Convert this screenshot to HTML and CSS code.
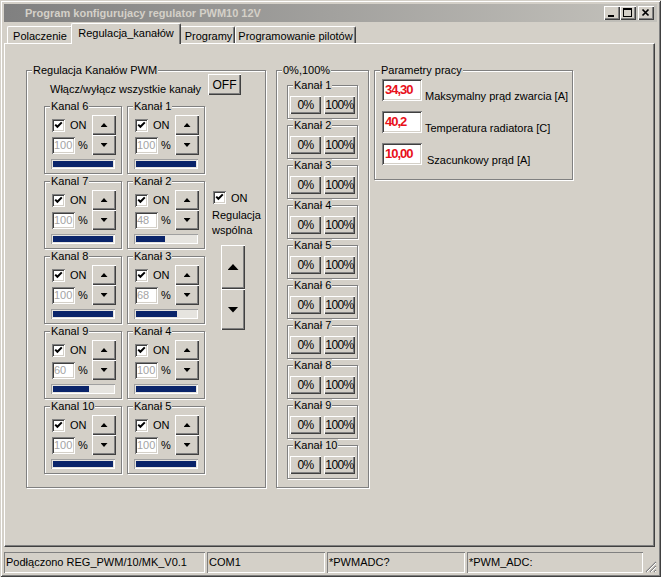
FILE: index.html
```html
<!DOCTYPE html>
<html lang="pl">
<head>
  <meta charset="UTF-8" />
  <title>Program konfigurujacy regulator PWM10 12V</title>
  <link rel="stylesheet" href="styles.css">
</head>
<body>
<div class="window">

  <div class="titlebar">
    <span class="title">Program konfigurujacy regulator PWM10 12V</span>
    <span class="cap-btn"><svg width="16" height="14" viewBox="0 0 16 14"><rect x="4" y="9" width="6" height="2"/></svg></span>
    <span class="cap-btn"><svg width="16" height="14" viewBox="0 0 16 14"><path fill-rule="evenodd" d="M3 2h9v9H3z M4 4v6h7V4z"/></svg></span>
    <span class="cap-btn close"><svg width="16" height="14" viewBox="0 0 16 14"><path d="M4.5 3.5l6 6M10.5 3.5l-6 6" stroke="#000" stroke-width="1.7"/></svg></span>
  </div>

  <div class="tabs">
    <div class="tab tab-1">Polaczenie</div>
    <div class="tab tab-2 active">Regulacja_kanałów</div>
    <div class="tab tab-3">Programy</div>
    <div class="tab tab-4">Programowanie pilotów</div>
  </div>

  <div class="page">

    <div class="group pwm">
      <span class="group-title">Regulacja Kanałów PWM</span>
      <div class="all-row">
        <span class="all-label">Włącz/wyłącz wszystkie kanały</span>
        <button class="btn btn-off">OFF</button>
      </div>

      <div class="channels">
        <div class="grid">

          <div class="group ch">
            <span class="group-title">Kanal 6</span>
            <div class="ch-main">
              <div class="ch-left">
                <div class="ch-row"><span class="chk"><svg width="9" height="9" viewBox="0 0 9 9"><path d="M1.2 3.6l2.2 2.2 4.4-4.4" stroke="#000" stroke-width="2" fill="none"/></svg></span><span class="on">ON</span></div>
                <div class="ch-row"><span class="num">100</span><span class="pct">%</span></div>
              </div>
              <div class="ch-btns"><button class="btn sbtn"><i class="arr up"></i></button><button class="btn sbtn"><i class="arr down"></i></button></div>
            </div>
            <div class="bar"><div class="fill" style="width:100%"></div></div>
          </div>

          <div class="group ch">
            <span class="group-title">Kanał 1</span>
            <div class="ch-main">
              <div class="ch-left">
                <div class="ch-row"><span class="chk"><svg width="9" height="9" viewBox="0 0 9 9"><path d="M1.2 3.6l2.2 2.2 4.4-4.4" stroke="#000" stroke-width="2" fill="none"/></svg></span><span class="on">ON</span></div>
                <div class="ch-row"><span class="num">100</span><span class="pct">%</span></div>
              </div>
              <div class="ch-btns"><button class="btn sbtn"><i class="arr up"></i></button><button class="btn sbtn"><i class="arr down"></i></button></div>
            </div>
            <div class="bar"><div class="fill" style="width:100%"></div></div>
          </div>

          <div class="group ch">
            <span class="group-title">Kanal 7</span>
            <div class="ch-main">
              <div class="ch-left">
                <div class="ch-row"><span class="chk"><svg width="9" height="9" viewBox="0 0 9 9"><path d="M1.2 3.6l2.2 2.2 4.4-4.4" stroke="#000" stroke-width="2" fill="none"/></svg></span><span class="on">ON</span></div>
                <div class="ch-row"><span class="num">100</span><span class="pct">%</span></div>
              </div>
              <div class="ch-btns"><button class="btn sbtn"><i class="arr up"></i></button><button class="btn sbtn"><i class="arr down"></i></button></div>
            </div>
            <div class="bar"><div class="fill" style="width:100%"></div></div>
          </div>

          <div class="group ch">
            <span class="group-title">Kanał 2</span>
            <div class="ch-main">
              <div class="ch-left">
                <div class="ch-row"><span class="chk"><svg width="9" height="9" viewBox="0 0 9 9"><path d="M1.2 3.6l2.2 2.2 4.4-4.4" stroke="#000" stroke-width="2" fill="none"/></svg></span><span class="on">ON</span></div>
                <div class="ch-row"><span class="num">48</span><span class="pct">%</span></div>
              </div>
              <div class="ch-btns"><button class="btn sbtn"><i class="arr up"></i></button><button class="btn sbtn"><i class="arr down"></i></button></div>
            </div>
            <div class="bar"><div class="fill" style="width:48%"></div></div>
          </div>

          <div class="group ch">
            <span class="group-title">Kanal 8</span>
            <div class="ch-main">
              <div class="ch-left">
                <div class="ch-row"><span class="chk"><svg width="9" height="9" viewBox="0 0 9 9"><path d="M1.2 3.6l2.2 2.2 4.4-4.4" stroke="#000" stroke-width="2" fill="none"/></svg></span><span class="on">ON</span></div>
                <div class="ch-row"><span class="num">100</span><span class="pct">%</span></div>
              </div>
              <div class="ch-btns"><button class="btn sbtn"><i class="arr up"></i></button><button class="btn sbtn"><i class="arr down"></i></button></div>
            </div>
            <div class="bar"><div class="fill" style="width:100%"></div></div>
          </div>

          <div class="group ch">
            <span class="group-title">Kanał 3</span>
            <div class="ch-main">
              <div class="ch-left">
                <div class="ch-row"><span class="chk"><svg width="9" height="9" viewBox="0 0 9 9"><path d="M1.2 3.6l2.2 2.2 4.4-4.4" stroke="#000" stroke-width="2" fill="none"/></svg></span><span class="on">ON</span></div>
                <div class="ch-row"><span class="num">68</span><span class="pct">%</span></div>
              </div>
              <div class="ch-btns"><button class="btn sbtn"><i class="arr up"></i></button><button class="btn sbtn"><i class="arr down"></i></button></div>
            </div>
            <div class="bar"><div class="fill" style="width:68%"></div></div>
          </div>

          <div class="group ch">
            <span class="group-title">Kanal 9</span>
            <div class="ch-main">
              <div class="ch-left">
                <div class="ch-row"><span class="chk"><svg width="9" height="9" viewBox="0 0 9 9"><path d="M1.2 3.6l2.2 2.2 4.4-4.4" stroke="#000" stroke-width="2" fill="none"/></svg></span><span class="on">ON</span></div>
                <div class="ch-row"><span class="num">60</span><span class="pct">%</span></div>
              </div>
              <div class="ch-btns"><button class="btn sbtn"><i class="arr up"></i></button><button class="btn sbtn"><i class="arr down"></i></button></div>
            </div>
            <div class="bar"><div class="fill" style="width:60%"></div></div>
          </div>

          <div class="group ch">
            <span class="group-title">Kanał 4</span>
            <div class="ch-main">
              <div class="ch-left">
                <div class="ch-row"><span class="chk"><svg width="9" height="9" viewBox="0 0 9 9"><path d="M1.2 3.6l2.2 2.2 4.4-4.4" stroke="#000" stroke-width="2" fill="none"/></svg></span><span class="on">ON</span></div>
                <div class="ch-row"><span class="num">100</span><span class="pct">%</span></div>
              </div>
              <div class="ch-btns"><button class="btn sbtn"><i class="arr up"></i></button><button class="btn sbtn"><i class="arr down"></i></button></div>
            </div>
            <div class="bar"><div class="fill" style="width:100%"></div></div>
          </div>

          <div class="group ch">
            <span class="group-title">Kanal 10</span>
            <div class="ch-main">
              <div class="ch-left">
                <div class="ch-row"><span class="chk"><svg width="9" height="9" viewBox="0 0 9 9"><path d="M1.2 3.6l2.2 2.2 4.4-4.4" stroke="#000" stroke-width="2" fill="none"/></svg></span><span class="on">ON</span></div>
                <div class="ch-row"><span class="num">100</span><span class="pct">%</span></div>
              </div>
              <div class="ch-btns"><button class="btn sbtn"><i class="arr up"></i></button><button class="btn sbtn"><i class="arr down"></i></button></div>
            </div>
            <div class="bar"><div class="fill" style="width:100%"></div></div>
          </div>

          <div class="group ch">
            <span class="group-title">Kanał 5</span>
            <div class="ch-main">
              <div class="ch-left">
                <div class="ch-row"><span class="chk"><svg width="9" height="9" viewBox="0 0 9 9"><path d="M1.2 3.6l2.2 2.2 4.4-4.4" stroke="#000" stroke-width="2" fill="none"/></svg></span><span class="on">ON</span></div>
                <div class="ch-row"><span class="num">100</span><span class="pct">%</span></div>
              </div>
              <div class="ch-btns"><button class="btn sbtn"><i class="arr up"></i></button><button class="btn sbtn"><i class="arr down"></i></button></div>
            </div>
            <div class="bar"><div class="fill" style="width:100%"></div></div>
          </div>

        </div>

        <div class="side">
          <div class="ch-row"><span class="chk"><svg width="9" height="9" viewBox="0 0 9 9"><path d="M1.2 3.6l2.2 2.2 4.4-4.4" stroke="#000" stroke-width="2" fill="none"/></svg></span><span class="on">ON</span></div>
          <div class="side-label">Regulacja<br>wspólna</div>
          <button class="btn big big-up"><i class="arr big-arr up"></i></button>
          <button class="btn big big-down"><i class="arr big-arr down"></i></button>
        </div>
      </div>
    </div>

    <div class="group zp">
      <span class="group-title">0%,100%</span>
      <div class="group sub"><span class="group-title">Kanał 1</span><button class="btn zbtn">0%</button><button class="btn zbtn">100%</button></div>
      <div class="group sub"><span class="group-title">Kanał 2</span><button class="btn zbtn">0%</button><button class="btn zbtn">100%</button></div>
      <div class="group sub"><span class="group-title">Kanał 3</span><button class="btn zbtn">0%</button><button class="btn zbtn">100%</button></div>
      <div class="group sub"><span class="group-title">Kanał 4</span><button class="btn zbtn">0%</button><button class="btn zbtn">100%</button></div>
      <div class="group sub"><span class="group-title">Kanał 5</span><button class="btn zbtn">0%</button><button class="btn zbtn">100%</button></div>
      <div class="group sub"><span class="group-title">Kanał 6</span><button class="btn zbtn">0%</button><button class="btn zbtn">100%</button></div>
      <div class="group sub"><span class="group-title">Kanał 7</span><button class="btn zbtn">0%</button><button class="btn zbtn">100%</button></div>
      <div class="group sub"><span class="group-title">Kanał 8</span><button class="btn zbtn">0%</button><button class="btn zbtn">100%</button></div>
      <div class="group sub"><span class="group-title">Kanał 9</span><button class="btn zbtn">0%</button><button class="btn zbtn">100%</button></div>
      <div class="group sub"><span class="group-title">Kanał 10</span><button class="btn zbtn">0%</button><button class="btn zbtn">100%</button></div>
    </div>

    <div class="group params">
      <span class="group-title">Parametry pracy</span>
      <div class="prow"><span class="fld">34,30</span><span class="plabel">Maksymalny prąd zwarcia [A]</span></div>
      <div class="prow"><span class="fld">40,2</span><span class="plabel">Temperatura radiatora [C]</span></div>
      <div class="prow"><span class="fld">10,00</span><span class="plabel plabel-3">Szacunkowy prąd [A]</span></div>
    </div>

  </div>

  <div class="status">
    <div class="st st-1">Podłączono REG_PWM/10/MK_V0.1</div>
    <div class="st st-2">COM1</div>
    <div class="st st-3">*PWMADC?</div>
    <div class="st st-4">*PWM_ADC:</div>
    <div class="grip"><svg width="12" height="12" viewBox="0 0 12 12"><path d="M11 1L1 11M11 5L5 11M11 9L9 11" stroke="#808080" stroke-width="1.2"/><path d="M11 2L2 11M11 6L6 11M11 10L10 11" stroke="#fff" stroke-width="1"/></svg></div>
  </div>

</div>
</body>
</html>
```

FILE: styles.css
```css
body {
  margin: 0;
  background: #d4d0c8;
  font: 11px "Liberation Sans", Arial, sans-serif;
  color: #000;
}
.window {
  width: 661px;
  height: 577px;
  box-sizing: border-box;
  padding: 4px;
  display: flex;
  flex-direction: column;
  box-shadow: inset 1px 1px #d4d0c8, inset -1px -1px #404040, inset 2px 2px #fff, inset -2px -2px #808080;
}

/* title bar */
.titlebar {
  flex: none;
  height: 18px;
  display: flex;
  align-items: center;
  padding: 0 3px 0 21px;
  background: linear-gradient(to right, #808080, #c4c2bc);
}
.title {
  flex: 1;
  font-weight: bold;
  color: #d4d0c8;
}
.cap-btn {
  width: 16px;
  height: 14px;
  background: #d4d0c8;
  box-shadow: inset 1px 1px #fff, inset -1px -1px #404040, inset -2px -2px #808080;
}
.cap-btn svg {
  display: block;
}
.cap-btn.close {
  margin-left: 2px;
}

/* tabs */
.tabs {
  flex: none;
  height: 21px;
  display: flex;
  align-items: flex-end;
  padding-left: 3px;
  position: relative;
  z-index: 1;
}
.tab {
  height: 17px;
  box-sizing: border-box;
  border: 1px solid #fff;
  border-right-color: #404040;
  border-bottom: none;
  border-radius: 2px 2px 0 0;
  box-shadow: inset -1px 0 #808080;
  display: flex;
  align-items: center;
  justify-content: center;
  padding-top: 1px;
  white-space: nowrap;
}
.tab-1 { width: 66px; }
.tab-2 { width: 110px; }
.tab-3 { width: 56px; padding-left: 3px; }
.tab-4 { width: 121px; }
.tab.active {
  height: 21px;
  margin: 0 -2px -1px;
  padding: 0 0 3px;
  background: #d4d0c8;
  position: relative;
  z-index: 2;
}

/* page */
.page {
  flex: 1;
  margin-right: 2px;
  border: 1px solid;
  border-color: #fff #404040 #404040 #fff;
  box-shadow: inset -1px -1px #808080;
  padding: 26px 0 0 21px;
  display: flex;
  align-items: flex-start;
}

/* group boxes */
.group {
  position: relative;
  box-sizing: border-box;
  border: 1px solid #808080;
  box-shadow: inset 1px 1px #fff, 1px 1px #fff;
}
.group-title {
  position: absolute;
  top: -7px;
  left: 5px;
  padding: 0 1px;
  line-height: 13px;
  background: #d4d0c8;
  white-space: nowrap;
}

/* buttons */
.btn {
  font: inherit;
  color: #000;
  background: #d4d0c8;
  border: none;
  padding: 0;
  margin: 0;
  box-shadow: inset 1px 1px #fff, inset -1px -1px #404040, inset -2px -2px #808080;
  display: flex;
  align-items: center;
  justify-content: center;
}
.arr {
  display: block;
  width: 7px;
  height: 4px;
  background: #000;
}
.arr.up {
  clip-path: polygon(50% 0, 100% 100%, 0 100%);
}
.arr.down {
  clip-path: polygon(0 0, 100% 0, 50% 100%);
}

/* sunken controls */
.chk, .num, .fld {
  background: #fff;
  box-sizing: border-box;
  box-shadow: inset 1px 1px #808080, inset -1px -1px #fff, inset 2px 2px #404040, inset -2px -2px #d4d0c8;
}
.chk {
  width: 13px;
  height: 13px;
  margin-left: 1px;
  display: flex;
  align-items: center;
  justify-content: center;
}
.chk svg {
  display: block;
}

/* PWM group */
.pwm {
  width: 240px;
  height: 418px;
  margin-right: 10px;
  padding: 3px 0 0 17px;
}
.all-row {
  width: 197px;
  height: 21px;
  display: flex;
  justify-content: space-between;
  align-items: flex-end;
}
.all-label {
  margin-left: 6px;
  margin-bottom: -1px;
  line-height: 13px;
}
.btn-off {
  width: 33px;
  height: 21px;
  font-size: 12px;
}
.channels {
  display: flex;
  margin-top: 11px;
}
.grid {
  display: grid;
  grid-template-columns: 78px 78px;
  column-gap: 5px;
  row-gap: 7px;
}
.ch {
  height: 68px;
  padding: 8px 5px 4px 6px;
}
.ch-main {
  display: flex;
}
.ch-left {
  width: 41px;
}
.ch-row {
  height: 20px;
  display: flex;
  align-items: center;
}
.on {
  margin-left: 5px;
}
.num {
  width: 23px;
  height: 17px;
  margin-left: 1px;
  padding: 2px 0 0 2px;
  line-height: 13px;
  color: #a4a4a4;
}
.pct {
  margin-left: 3px;
}
.ch-btns {
  width: 24px;
}
.sbtn {
  width: 24px;
  height: 20px;
}
.bar {
  margin-top: 4px;
  width: 64px;
  height: 10px;
  box-sizing: border-box;
  padding: 2px;
  background: #e6e4df;
  box-shadow: inset 1px 1px #a0a0a0, inset -1px -1px #fff;
}
.fill {
  height: 100%;
  background: #0a246a;
}

.side {
  margin-left: 6px;
  padding-top: 85px;
}
.side .chk {
  margin-left: 2px;
}
.side .ch-row {
  height: 13px;
}
.side-label {
  margin-top: 4px;
  margin-left: 1px;
  line-height: 15px;
}
.big {
  width: 24px;
  margin-left: 10px;
}
.big-up {
  margin-top: 7px;
  height: 44px;
}
.big-down {
  height: 41px;
}
.big-arr {
  width: 11px;
  height: 6px;
}

/* 0%,100% group */
.zp {
  width: 93px;
  height: 418px;
  margin-right: 5px;
  padding: 14px 0 0 10px;
  display: flex;
  flex-direction: column;
  gap: 6px;
}
.sub {
  flex: none;
  width: 71px;
  height: 34px;
  padding: 10px 2px 4px;
  display: flex;
  gap: 3px;
}
.zbtn {
  width: 31px;
  height: 18px;
  font-size: 12px;
  letter-spacing: -0.6px;
}

/* parameters */
.params {
  width: 199px;
  height: 110px;
  padding: 8px 0 0 7px;
  display: flex;
  flex-direction: column;
  gap: 10px;
}
.prow {
  height: 22px;
  display: flex;
  align-items: flex-end;
}
.fld {
  width: 40px;
  height: 22px;
  padding: 3px 0 0 3px;
  font-size: 13px;
  font-weight: bold;
  line-height: 15px;
  letter-spacing: -1px;
  color: #e8101a;
}
.plabel {
  margin-left: 3px;
  margin-bottom: -2px;
  line-height: 13px;
  white-space: nowrap;
}
.plabel-3 {
  margin-left: 5px;
}

/* status bar */
.status {
  flex: none;
  height: 21px;
  margin-top: 5px;
  display: flex;
  gap: 2px;
}
.st {
  box-sizing: border-box;
  padding-left: 2px;
  line-height: 21px;
  white-space: nowrap;
  overflow: hidden;
  box-shadow: inset 1px 1px #808080, inset -1px -1px #fff;
}
.st-1 { width: 201px; }
.st-2 { width: 118px; }
.st-3 { width: 138px; }
.st-4 { flex: 1; }
.grip {
  width: 12px;
  display: flex;
  align-items: flex-end;
}
.grip svg {
  display: block;
}
```
